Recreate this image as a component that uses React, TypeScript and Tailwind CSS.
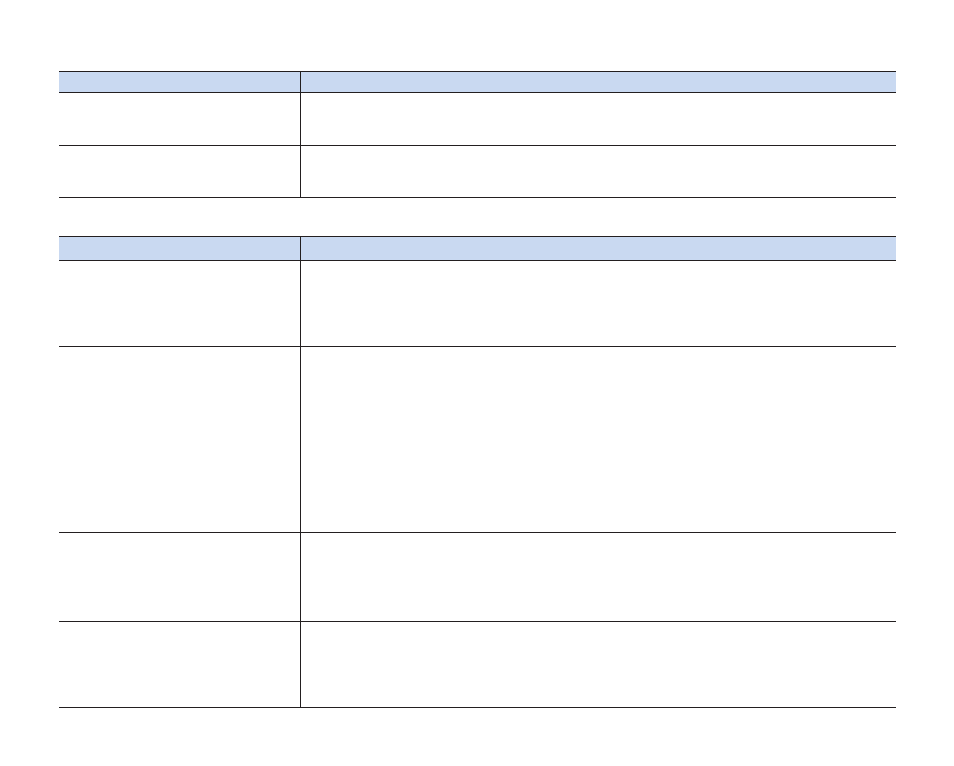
import React from 'react';

interface TableProps {
  headerHeight: number;
  rowHeights: number[];
}

const BlankTable: React.FC<TableProps> = ({ headerHeight, rowHeights }) => {
  return (
    <div className="w-[837px] border-t border-[#231f20]">
      {/* header */}
      <div className="flex bg-[#c9d9f1] border-b border-[#231f20]" style={{ height: headerHeight + 1 }}>
        <div className="w-[242px] border-r border-[#231f20]" />
        <div className="flex-1" />
      </div>
      {rowHeights.map((h, i) => (
        <div key={i} className="flex border-b border-[#231f20]" style={{ height: h + 1 }}>
          <div className="w-[242px] border-r border-[#231f20]" />
          <div className="flex-1" />
        </div>
      ))}
    </div>
  );
};

const App: React.FC = () => {
  return (
    <div className="w-[954px] h-[766px] bg-white pl-[59px] pt-[71px] font-['Liberation_Sans',sans-serif]">
      <BlankTable headerHeight={20} rowHeights={[52, 51]} />
      <div className="mt-[38px]">
        <BlankTable headerHeight={23} rowHeights={[85, 185, 88, 85]} />
      </div>
    </div>
  );
};

export default App;
